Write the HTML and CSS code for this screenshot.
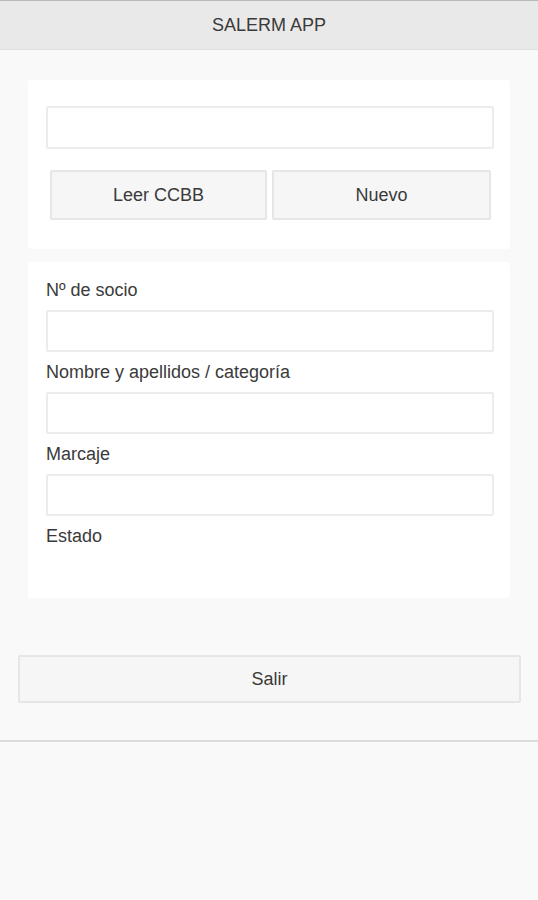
FILE: index.html
```html
<!DOCTYPE html>
<html lang="es">
<head>
<meta charset="utf-8">
<title>SALERM APP</title>
<link rel="stylesheet" href="styles.css">
</head>
<body>
<div class="page">
  <header class="header"><h1 class="title">SALERM APP</h1></header>
  <main class="content">
    <section class="card card-top">
      <input class="field" type="text">
      <div class="btn-row">
        <button class="btn" type="button">Leer CCBB</button>
        <button class="btn" type="button">Nuevo</button>
      </div>
    </section>
    <section class="card card-form">
      <label class="label">Nº de socio</label>
      <input class="field" type="text">
      <label class="label">Nombre y apellidos / categoría</label>
      <input class="field" type="text">
      <label class="label">Marcaje</label>
      <input class="field" type="text">
      <label class="label">Estado</label>
      <div class="estado"></div>
    </section>
  </main>
  <div class="bottom">
    <button class="btn btn-wide" type="button">Salir</button>
  </div>
  <div class="footer"></div>
</div>
</body>
</html>
```
FILE: styles.css
```css
html, body {
  margin: 0;
  padding: 0;
  height: 100%;
}
body {
  background: #f9f9f9;
  font-family: "Liberation Sans", Arial, sans-serif;
  font-size: 18px;
  color: #333;
}
.page {
  min-height: 100%;
}
.header {
  height: 50px;
  box-sizing: border-box;
  background: #e9e9e9;
  border-top: 1px solid #b8b8b8;
  border-bottom: 1px solid #dedede;
  display: flex;
  align-items: center;
  justify-content: center;
}
.title {
  margin: 0;
  font-size: 18px;
  font-weight: normal;
  color: #3a3a3a;
}
.content {
  padding: 30px 28px 0;
  display: flex;
  flex-direction: column;
  gap: 13px;
}
.card {
  background: #fff;
  border-radius: 4px;
  padding: 17px 16px 17px 18px;
  display: flex;
  flex-direction: column;
}
.field {
  display: block;
  box-sizing: border-box;
  width: 100%;
  height: 42px;
  margin: 9px 0;
  border: 2px solid #ececec;
  border-radius: 2px;
  background: #fff;
  font: inherit;
  outline: none;
}
.card-top .field {
  height: 43px;
  margin-bottom: 0;
}
.btn-row {
  display: grid;
  grid-template-columns: 217px 219px;
  gap: 5px;
  padding: 0 4px;
  margin: 21px 0 12px;
}
.btn {
  height: 50px;
  box-sizing: border-box;
  background: #f6f6f6;
  border: 2px solid #e6e6e6;
  border-radius: 2px;
  font: inherit;
  font-size: 18px;
  color: #3a3a3a;
  padding: 0;
}
.label {
  display: block;
  line-height: 22px;
  height: 22px;
  color: #3a3a3a;
}
.estado {
  height: 34px;
}
.bottom {
  padding: 57px 17px 0 18px;
}
.btn-wide {
  width: 100%;
  height: 48px;
}
.footer {
  margin-top: 37px;
  border-top: 2px solid #dcdcdc;
}
```
